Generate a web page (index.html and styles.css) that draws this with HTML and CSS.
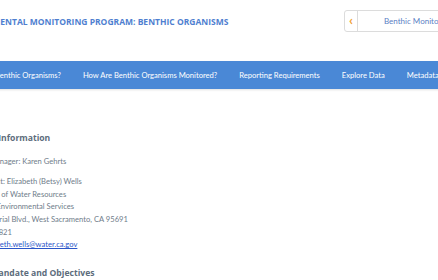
FILE: index.html
```html
<!DOCTYPE html>
<html>
<head>
    <title>Environmental Monitoring Program: Benthic Organisms</title>
    <meta charset="UTF-8">
    <link rel="stylesheet" href="styles.css">
</head>
<body>
<div class="page">
    <div id="header">
        <div class="title">Environmental Monitoring Program: Benthic Organisms</div>
        <div class="switcher">
            <div class="prev">&#8249;</div>
            <div class="current">Benthic Monitoring</div>
        </div>
    </div>

    <div id="nav">
        <ul>
            <li>What Are Benthic Organisms?</li>
            <li>How Are Benthic Organisms Monitored?</li>
            <li>Reporting Requirements</li>
            <li>Explore Data</li>
            <li>Metadata</li>
        </ul>
    </div>

    <div id="content">
        <h2>Program Information</h2>
        <p>Program Manager: Karen Gehrts</p>
        <p>
            Lead Contact: Elizabeth (Betsy) Wells<br>
            Department of Water Resources<br>
            Division of Environmental Services<br>
            3500 Industrial Blvd., West Sacramento, CA 95691<br>
            (916) 376-1821<br>
            Email: <a href="#">elizabeth.wells@water.ca.gov</a>
        </p>
        <h2>Permit Mandate and Objectives</h2>
    </div>
</div>
</body>
</html>
```

FILE: styles.css
```css
html {
    box-sizing: border-box;
}
*, *:before, *:after {
    box-sizing: inherit;
}

body{
    margin: 0;
    overflow: hidden;
    font-family: Lato, "Open Sans", Arial, sans-serif;
    background-color: #ffffff;
}

.page{
    width: 640px;
    margin-left: -60px;
}

#header{
    height: 61px;
    display: flex;
    align-items: flex-start;
    padding-top: 10px;
}

.title{
    font-family: "Open Sans", Arial, sans-serif;
    font-weight: 700;
    font-size: 8.5px;
    text-transform: uppercase;
    color: #4f7fd0;
    padding: 6px 0 0 13px;
    width: 404px;
}

.switcher{
    display: flex;
    height: 22px;
    border: 1px solid #dcdcdc;
    border-radius: 3px;
    width: 160px;
}

.switcher .prev{
    width: 13px;
    border-right: 1px solid #dcdcdc;
    color: #f0a030;
    font-size: 14px;
    font-weight: 700;
    text-align: center;
    line-height: 18px;
}

.switcher .current{
    flex: 1;
    padding-left: 26px;
    font-size: 8px;
    color: #5b80c4;
    line-height: 20px;
}

#nav{
    background-color: #4a88d6;
    height: 28px;
    box-shadow: 0 1px 2px rgba(0, 0, 0, 0.12);
}

#nav ul{
    margin: 0;
    padding: 0 0 0 10px;
    display: flex;
    height: 100%;
    align-items: center;
}

#nav li{
    list-style: none;
    color: #ffffff;
    font-size: 7.6px;
    padding: 0 11px;
    white-space: nowrap;
}

#content{
    padding: 43px 0 0 19px;
    color: #6f7d8a;
    font-size: 7.6px;
    line-height: 12.6px;
}

#content h2{
    font-family: "Open Sans", Arial, sans-serif;
    font-size: 8.6px;
    font-weight: 700;
    color: #5d6d7c;
    margin: 0 0 10px 0;
}

#content p{
    margin: 0 0 8px 0;
}

#content p + h2{
    margin-top: 16px;
}

#content a{
    color: #2a55c8;
}
```
